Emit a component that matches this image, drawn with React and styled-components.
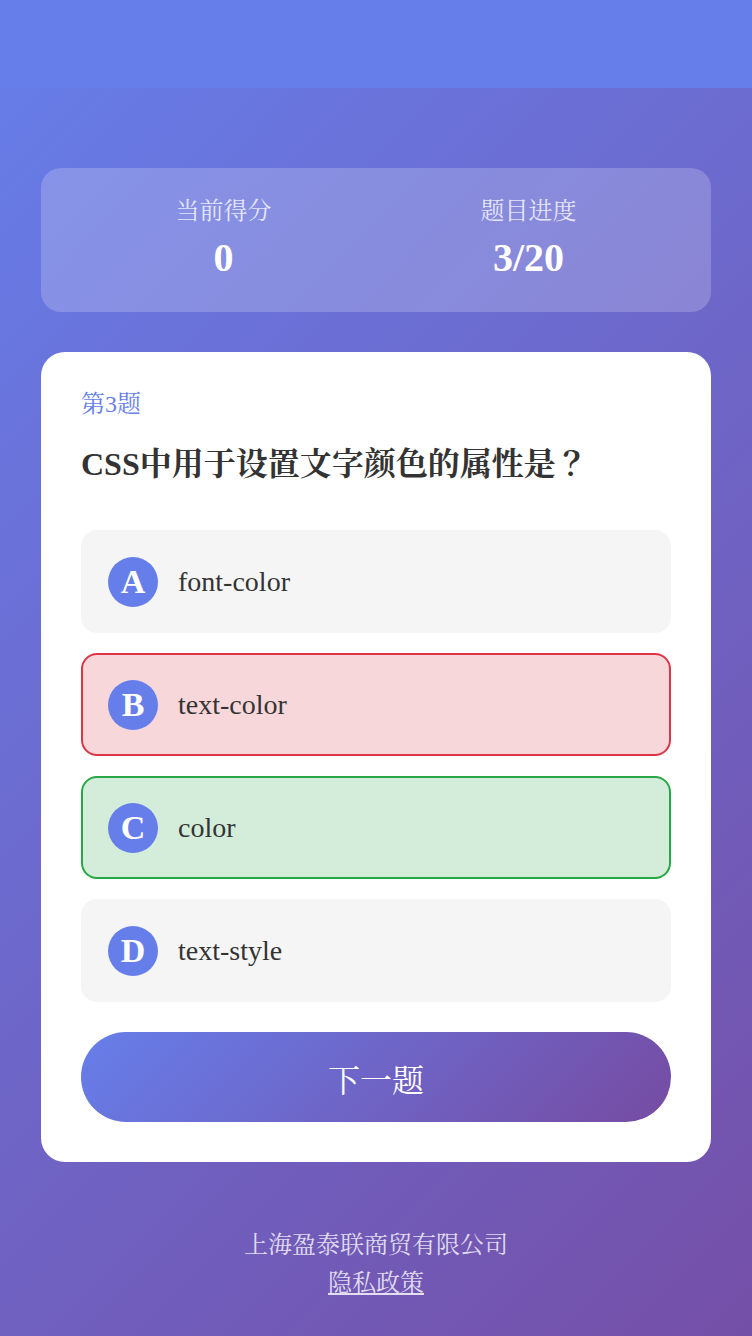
import React, { useState } from 'react';
import styled, { createGlobalStyle } from 'styled-components';

const GlobalStyle = createGlobalStyle`
  * {
    box-sizing: border-box;
  }
  html, body {
    margin: 0;
    padding: 0;
  }
  body {
    font-family: "Liberation Serif", "Noto Serif CJK JP", "Noto Serif CJK SC", serif;
    background: linear-gradient(135deg, #667eea 0%, #764ba2 100%);
    min-height: 100vh;
  }
`;

const Header = styled.header`
  height: 88px;
  background: #667eea;
`;

const Page = styled.main`
  max-width: 750px;
  margin: 0 auto;
  padding: 80px 40px 222px;
`;

const StatsCard = styled.section`
  display: flex;
  padding: 30px;
  border-radius: 20px;
  background: rgba(255, 255, 255, 0.2);
  margin-bottom: 40px;
`;

const Stat = styled.div`
  flex: 1;
  display: flex;
  flex-direction: column;
  align-items: center;
  gap: 10px;
`;

const StatLabel = styled.span`
  font-size: 24px;
  line-height: 26px;
  color: rgba(255, 255, 255, 0.8);
`;

const StatValue = styled.span`
  font-size: 40px;
  line-height: 48px;
  font-weight: bold;
  color: #fff;
`;

const QuizCard = styled.section`
  background: #fff;
  border-radius: 24px;
  padding: 40px;
`;

const QuestionNo = styled.div`
  font-size: 24px;
  line-height: 24px;
  color: #667eea;
  margin-bottom: 24px;
`;

const QuestionTitle = styled.h2`
  margin: 0 0 42px;
  font-size: 32px;
  line-height: 48px;
  font-weight: bold;
  color: #333;
  text-spacing-trim: space-all;
`;

const OptionList = styled.div`
  display: flex;
  flex-direction: column;
  gap: 20px;
  margin-bottom: 30px;
`;

const optionColors = {
  normal: { bg: '#f5f5f5', border: 'transparent' },
  wrong: { bg: '#f8d7da', border: '#dc3545' },
  right: { bg: '#d4edda', border: '#28a745' },
};

const Option = styled.div`
  display: flex;
  align-items: center;
  gap: 20px;
  padding: 24.5px 25px;
  border-radius: 16px;
  border: 2px solid ${(p) => optionColors[p.$state].border};
  background: ${(p) => optionColors[p.$state].bg};
  cursor: pointer;
`;

const Letter = styled.span`
  width: 50px;
  height: 50px;
  flex-shrink: 0;
  border-radius: 50%;
  background: #667eea;
  color: #fff;
  font-size: 34px;
  font-weight: bold;
  display: flex;
  align-items: center;
  justify-content: center;
`;

const OptionText = styled.span`
  font-size: 28px;
  color: #333;
`;

const NextButton = styled.button`
  display: block;
  width: 100%;
  height: 90px;
  border: none;
  border-radius: 45px;
  background: linear-gradient(135deg, #667eea 0%, #764ba2 100%);
  color: #fff;
  font-family: inherit;
  font-size: 32px;
  padding-top: 2px;
  cursor: pointer;
`;

const Footer = styled.footer`
  margin-top: 64px;
  text-align: center;
  font-size: 24px;
  line-height: 38px;
  color: rgba(255, 255, 255, 0.8);
  a {
    color: inherit;
    text-decoration: underline;
  }
`;

const options = [
  { key: 'A', text: 'font-color' },
  { key: 'B', text: 'text-color' },
  { key: 'C', text: 'color' },
  { key: 'D', text: 'text-style' },
];

const App = () => {
  const [picked] = useState('B');
  const answer = 'C';

  const stateOf = (key) => {
    if (key === answer) return 'right';
    if (key === picked) return 'wrong';
    return 'normal';
  };

  return (
    <>
      <GlobalStyle />
      <Header />
      <Page>
        <StatsCard>
          <Stat>
            <StatLabel>当前得分</StatLabel>
            <StatValue>0</StatValue>
          </Stat>
          <Stat>
            <StatLabel>题目进度</StatLabel>
            <StatValue>3/20</StatValue>
          </Stat>
        </StatsCard>

        <QuizCard>
          <QuestionNo>第3题</QuestionNo>
          <QuestionTitle>CSS中用于设置文字颜色的属性是？</QuestionTitle>
          <OptionList>
            {options.map((opt) => (
              <Option key={opt.key} $state={stateOf(opt.key)}>
                <Letter>{opt.key}</Letter>
                <OptionText>{opt.text}</OptionText>
              </Option>
            ))}
          </OptionList>
          <NextButton>下一题</NextButton>
        </QuizCard>

        <Footer>
          <div>上海盈泰联商贸有限公司</div>
          <a href="#privacy">隐私政策</a>
        </Footer>
      </Page>
    </>
  );
};

export default App;
